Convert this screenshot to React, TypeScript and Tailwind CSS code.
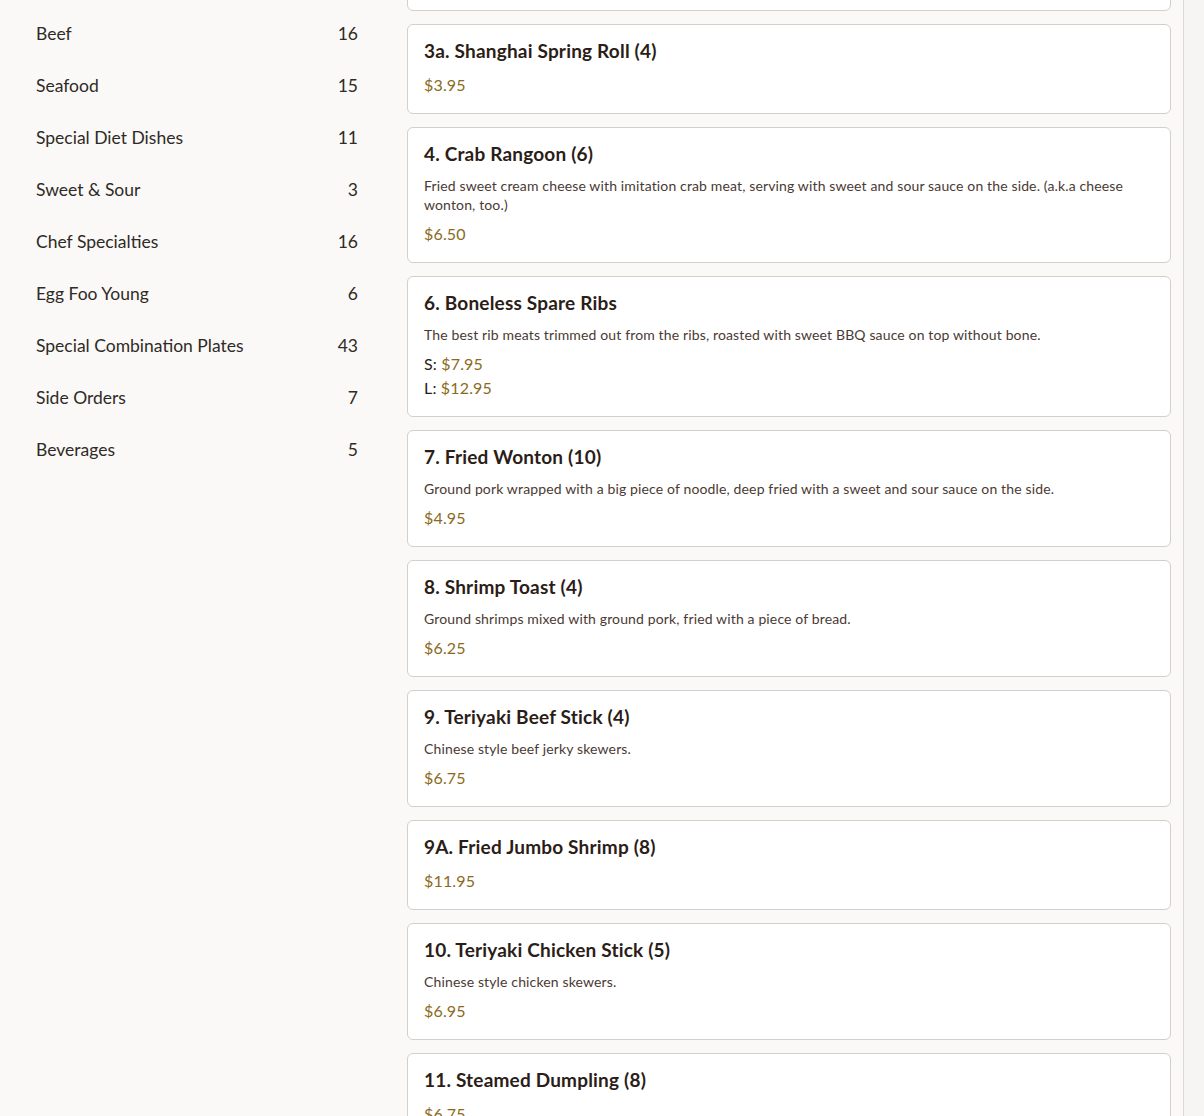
import { Fragment } from 'react';

interface Price {
    label?: string;
    value: string;
}

interface MenuItem {
    name: string;
    description?: string;
    prices: Price[];
}

const categories: { name: string; count: number }[] = [
    { name: 'Beef', count: 16 },
    { name: 'Seafood', count: 15 },
    { name: 'Special Diet Dishes', count: 11 },
    { name: 'Sweet & Sour', count: 3 },
    { name: 'Chef Specialties', count: 16 },
    { name: 'Egg Foo Young', count: 6 },
    { name: 'Special Combination Plates', count: 43 },
    { name: 'Side Orders', count: 7 },
    { name: 'Beverages', count: 5 },
];

const items: MenuItem[] = [
    { name: '3a. Shanghai Spring Roll (4)', prices: [{ value: '$3.95' }] },
    {
        name: '4. Crab Rangoon (6)',
        description:
            'Fried sweet cream cheese with imitation crab meat, serving with sweet and sour sauce on the side. (a.k.a cheese wonton, too.)',
        prices: [{ value: '$6.50' }],
    },
    {
        name: '6. Boneless Spare Ribs',
        description:
            'The best rib meats trimmed out from the ribs, roasted with sweet BBQ sauce on top without bone.',
        prices: [
            { label: 'S', value: '$7.95' },
            { label: 'L', value: '$12.95' },
        ],
    },
    {
        name: '7. Fried Wonton (10)',
        description:
            'Ground pork wrapped with a big piece of noodle, deep fried with a sweet and sour sauce on the side.',
        prices: [{ value: '$4.95' }],
    },
    {
        name: '8. Shrimp Toast (4)',
        description: 'Ground shrimps mixed with ground pork, fried with a piece of bread.',
        prices: [{ value: '$6.25' }],
    },
    {
        name: '9. Teriyaki Beef Stick (4)',
        description: 'Chinese style beef jerky skewers.',
        prices: [{ value: '$6.75' }],
    },
    { name: '9A. Fried Jumbo Shrimp (8)', prices: [{ value: '$11.95' }] },
    {
        name: '10. Teriyaki Chicken Stick (5)',
        description: 'Chinese style chicken skewers.',
        prices: [{ value: '$6.95' }],
    },
    { name: '11. Steamed Dumpling (8)', prices: [{ value: '$6.75' }] },
];

function MenuCard({ item }: { item: MenuItem }) {
    return (
        <div className="bg-white border border-[#d3cfca] rounded-md px-4 py-4">
            <h3 className="text-[19px] font-bold leading-5 tracking-[0.01em] text-[#2b1d17]">
                {item.name}
            </h3>
            {item.description && (
                <p className="mt-3 text-sm leading-[19px] tracking-[0.01em] text-[#4a3a33]">
                    {item.description}
                </p>
            )}
            <div className={item.description ? 'mt-2' : 'mt-3'}>
                {item.prices.map((p, i) => (
                    <div key={i} className="text-base leading-6 tracking-[0.01em] text-[#8a6a1c]">
                        {p.label && (
                            <Fragment>
                                <span className="text-[#2b1d17]">{p.label}: </span>
                            </Fragment>
                        )}
                        {p.value}
                    </div>
                ))}
            </div>
        </div>
    );
}

export default function App() {
    return (
        <div
            className="flex h-[1116px] overflow-hidden bg-[#faf9f7]"
            style={{ fontFamily: 'Lato, "Noto Sans", sans-serif' }}
        >
            {/* Category sidebar */}
            <aside className="w-[383px] shrink-0 pl-9 pr-[25px] pt-2">
                {categories.map((c) => (
                    <div
                        key={c.name}
                        className="flex h-[52px] items-center justify-between text-[17.5px] text-[#2f2a26]"
                    >
                        <span>{c.name}</span>
                        <span>{c.count}</span>
                    </div>
                ))}
            </aside>

            {/* Menu items (list scrolled, previous card peeks in at the top) */}
            <main className="flex-1 pl-6 pr-3">
                <div className="-mt-[107px] flex flex-col gap-[13px]">
                    <div className="h-[118px] bg-white border border-[#d3cfca] rounded-md"></div>
                    {items.map((item) => (
                        <MenuCard key={item.name} item={item} />
                    ))}
                </div>
            </main>

            <div className="w-[21px] shrink-0 border-l border-[#dcd8d3] bg-[#f6f5f3]"></div>
        </div>
    );
}
